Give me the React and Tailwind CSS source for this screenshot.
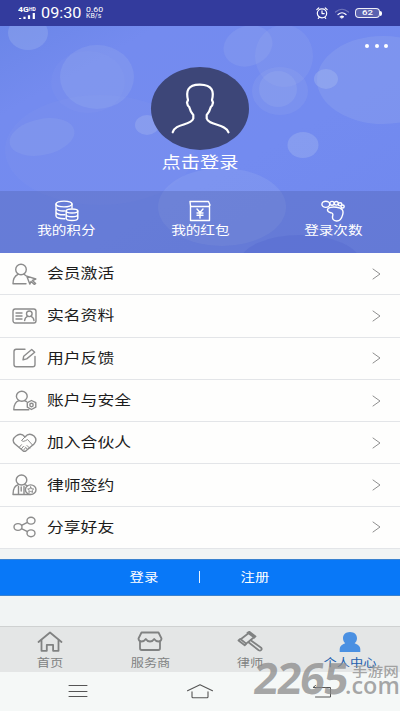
import clsx from 'clsx'

function T({ children, className, left }) {
  return (
    <span className={clsx('inline-block whitespace-nowrap scale-x-[1.2]',
      left ? 'origin-left' : 'origin-center', className)}>{children}</span>
  )
}

function Svg({ w, h, sw = 1.3, className, children }) {
  return (
    <svg width={w} height={h} viewBox={`0 0 ${w} ${h}`} fill="none"
      stroke="currentColor" strokeWidth={sw} strokeLinecap="round"
      strokeLinejoin="round" className={clsx('block shrink-0', className)}>
      {children}
    </svg>
  )
}

const ROWS = [
  { label: '会员激活', icon: (
    <>
      <ellipse cx="9" cy="6.5" rx="5.3" ry="5.2" />
      <path d="M6 11.300C2.500 13 1 16 1 20.700h13M12 11.300l2 1.400" />
      <path d="M14.800 13.200l9 2.800-3.400 1.500 3.200 3-1.200 1-3.400-3-1.200 2.600z" />
    </>
  ) },
  { label: '实名资料', icon: (
    <>
      <rect x="1" y="4" width="23" height="14" rx="2.2" />
      <path d="M4 8h6M4 11h6M4 14h6" />
      <circle cx="17.3" cy="8.8" r="2.8" />
      <path d="M12.600 15.600c.3-2.400 1.400-3.700 3-4.200M22 15.600c-.3-2.400-1.400-3.700-3-4.200" />
    </>
  ) },
  { label: '用户反馈', icon: (
    <>
      <path d="M13 2.200H4.200Q2 2.200 2 4.400v13.200q0 2.200 2.200 2.200h16.600q2.200 0 2.200-2.200V9.500" />
      <path d="M11 12.800l.7-3.600 8-6.700 3 2.800-8 6.600z" />
    </>
  ) },
  { label: '账户与安全', icon: (
    <>
      <ellipse cx="9.8" cy="6.2" rx="5.4" ry="5" />
      <path d="M7 10.700C3 12 1.800 15 1.800 19.800h15M12.500 10.700l2 .9" />
      <path d="M19.500 10.500l4.300 2.200v4.500l-4.300 2.300-4.200-2.300v-4.500z" />
      <circle cx="19.5" cy="15" r="1.7" />
    </>
  ) },
  { label: '加入合伙人', icon: (
    <>
      <path d="M13 5C10.500 2 7 1.700 4 4 .5 6.500.4 9.500 3 12l8 6.800q1.500 1 3 0l8-6.800C24.600 9.500 24.500 6.500 22 4c-3-2.300-6.500-2-9 1z" />
      <path d="M13 5L9.500 8.500q1.500 1.700 4 .2l2-1.200 5 5.500M7.500 15l2-2.300M9.500 16.700l2-2.400M11.600 18l1.700-2M15 13.500l2.700 2.700M13.300 15l2.400 2.600" strokeWidth="1" />
    </>
  ) },
  { label: '律师签约', icon: (
    <>
      <ellipse cx="9.5" cy="6" rx="5.3" ry="5" />
      <path d="M6.200 10.700Q1 12 1 20.500h17M12.700 10.700l2.500 1M6.500 20v-7.500M12 20v-7.500M9.200 13v4" />
      <ellipse cx="18.7" cy="15.7" rx="5.3" ry="4.8" />
      <path d="M18.700 12.900l.9 1.900 2.100.2-1.500 1.400.4 2-1.900-1-1.900 1 .4-2-1.500-1.400 2.100-.2z" strokeWidth="1" />
    </>
  ) },
  { label: '分享好友', icon: (
    <>
      <ellipse cx="6" cy="11" rx="4" ry="3.4" />
      <ellipse cx="19" cy="4.7" rx="4" ry="3.4" />
      <ellipse cx="19" cy="17.3" rx="4" ry="3.4" />
      <path d="M9.500 9.300l6-3M9.500 12.700l6 3" />
    </>
  ) },
]

const STATS = [
  { label: '我的积分', icon: (
    <>
      <ellipse cx="9" cy="4" rx="8" ry="2.9" />
      <path d="M1 4v12c0 1.700 3.500 2.800 9 2.700M17 4v4M1 8c0 2 4 3.300 9 2.900M1 12c0 2 4 3 9 2.700" />
      <ellipse cx="17" cy="11" rx="5.8" ry="2" />
      <path d="M11.200 11v7.200c0 1.300 2.500 2.300 5.800 2.300s5.800-1 5.800-2.300V11M11.200 14.700c0 1.300 2.500 2 5.800 2s5.800-.7 5.800-2" />
    </>
  ) },
  { label: '我的红包', icon: (
    <>
      <path d="M2.500 5.500v15h19V6.500M2.500 6L2 1.500h18.500l1.500 3.500-1 1.500H2.500" />
      <path d="M9 9l3 3.500L15 9M12 12.500V18M9 13h6M9 15.300h6" />
    </>
  ) },
  { label: '登录次数', icon: (
    <>
      <ellipse cx="4.8" cy="4.3" rx="3.9" ry="3.1" />
      <ellipse cx="11" cy="3.3" rx="2.2" ry="1.9" />
      <ellipse cx="15.3" cy="3.3" rx="2" ry="1.8" />
      <ellipse cx="19.1" cy="4.3" rx="1.8" ry="1.6" />
      <ellipse cx="21.6" cy="6.5" rx="1.6" ry="1.5" />
      <path d="M6.500 9.700c.3-2.500 5-3 9-2.500 6 .8 7.500 3.500 6 8-1 4-3 6-6 5.800-3.200-.2-4.600-2.300-3.800-5.300.6-2-.3-2.500-2-3C7.800 12.200 6.300 11.700 6.500 9.700z" />
    </>
  ) },
]

const TABS = [
  { label: '首页', icon: (
    <>
      <path d="M1.500 11L13 1.500 24.500 11" />
      <path d="M4.500 9.500v10.300h5.300v-6h6.300v6h5.400V9.500" />
    </>
  ) },
  { label: '服务商', icon: (
    <>
      <path d="M4.500 1.500h17l3 6q0 2.800-3 3-2.700 0-4.300-2.500-1.500 2.500-4.200 2.500T8.800 8Q7.200 10.500 4.500 10.500q-3-.2-3-3z" />
      <path d="M3 10.500v6.800q0 1.700 1.700 1.700h16.600q1.700 0 1.700-1.700v-6.800" />
    </>
  ) },
  { label: '律师', icon: (
    <>
      <path d="M3.700 8.300L11.500 2.300l5.500 4-7.800 6.300zM10.500 1.800l1.800-1 6.200 4.600-1.500 1.300M3.200 8L1.500 9.500l6.200 4.700 1.600-1.400" />
      <path d="M11.500 11.300l10.200 8q1.500.8 2.500-.3t-.1-2.300L13.700 9.300" />
    </>
  ) },
  { label: '个人中心', active: true, icon: (
    <path d="M13 1c4.500 0 7 2.800 7 6.200 0 2.300-1 4-2.400 5 3 1 5.700 3 5.700 5.800v3H2.700v-3c0-2.800 2.400-4.800 5.500-5.800C7 11.200 6 9.500 6 7.200 6 3.800 8.500 1 13 1z"
      fill="currentColor" stroke="none" />
  ) },
]

function StatusBar() {
  return (
    <div className="flex h-[26px] shrink-0 items-center bg-[#333b9d] pl-[18px] pr-[18px]
      font-['Roboto',sans-serif] text-white">
      <div className="flex w-[19px] flex-col">
        <div className="flex h-[6px] items-start font-bold leading-[6px]">
          <span className="inline-block w-[11px] origin-left scale-x-[1.15] text-[7.5px]">4G</span>
          <span className="text-[5px] leading-[4px]">HD</span>
        </div>
        <Svg w={18} h={6} sw={2.2}>
          <path d="M1 6h2.200M6.500 6V3.800M11 6V2.300M15.800 6V0" strokeLinecap="butt" />
        </Svg>
      </div>
      <span className="ml-[4px] w-[45px] text-[14px] leading-none">
        <T left className="scale-x-[1.16]">09:30</T>
      </span>
      <span className="flex flex-col text-[7px] leading-[6.500px]">
        <T left className="scale-x-[1.25]">0.60</T>
        <T left className="scale-x-[1]">KB/s</T>
      </span>
      <div className="ml-auto flex items-center">
        <Svg w={12} h={12} sw={1.2}>
          <ellipse cx="6" cy="6.3" rx="4.7" ry="4.5" />
          <path d="M6 3.800v2.800h2.200M.8 2.600L2.700 1M11.200 2.600L9.300 1M2.300 11.300l.9-.9M9.700 11.300l-.9-.9" />
        </Svg>
        <Svg w={16} h={12} sw={1.2} className="ml-[6px] mt-[2px]">
          <path d="M1.500 4Q8-1.500 14.500 4" opacity=".3" />
          <path d="M4 6.500Q8 3 12 6.500" />
          <path d="M6 8.700Q8 7 10 8.700L8 10.200z" fill="currentColor" strokeWidth=".6" />
        </Svg>
        <span className="ml-[5px] flex h-[10px] w-[25px] items-center justify-center rounded-[4px]
          border border-white/90 bg-white/20 text-[8px] font-medium leading-none">
          <T>62</T>
        </span>
        <span className="h-[5px] w-[2px] rounded-r bg-white" />
      </div>
    </div>
  )
}

function Bokeh() {
  return (
    <svg width="400" height="227" viewBox="0 26 400 227" className="absolute inset-0">
      <defs>
        <linearGradient id="sky" x1="0" y1="0" x2="1" y2="1">
          <stop offset="0" stopColor="#6b86e8" />
          <stop offset=".2" stopColor="#748bef" />
          <stop offset=".6" stopColor="#738bf0" />
          <stop offset="1" stopColor="#7088ee" />
        </linearGradient>
      </defs>
      <rect y="26" width="400" height="227" fill="url(#sky)" />
      <g fill="#a5b8ee">
        <ellipse cx="28" cy="33" rx="20" ry="17" opacity=".3" />
        <ellipse cx="97" cy="77" rx="37" ry="32" opacity=".22" />
        <ellipse cx="88" cy="82" rx="37" ry="31" opacity=".06" />
        <ellipse cx="100" cy="150" rx="95" ry="55" opacity=".06" />
        <ellipse cx="42" cy="137" rx="33" ry="18" opacity=".16" transform="rotate(-12 42 137)" />
        <ellipse cx="147" cy="125" rx="12" ry="10" opacity=".36" />
        <ellipse cx="248" cy="46" rx="25" ry="20" opacity=".18" transform="rotate(-20 248 46)" />
        <ellipse cx="284" cy="56" rx="29" ry="31" opacity=".15" />
        <ellipse cx="280" cy="91" rx="28" ry="24" opacity=".15" />
        <ellipse cx="278" cy="89" rx="19" ry="18" opacity=".22" />
        <ellipse cx="383" cy="80" rx="66" ry="44" opacity=".22" />
        <ellipse cx="326" cy="79" rx="12" ry="10" opacity=".42" />
        <ellipse cx="303" cy="145" rx="15.5" ry="13" opacity=".38" />
        <ellipse cx="222" cy="207" rx="64" ry="39" opacity=".2" />
      </g>
      <ellipse cx="300" cy="262" rx="60" ry="27" fill="#5368e0" opacity=".3" />
    </svg>
  )
}

function Header() {
  return (
    <div className="relative flex h-[227px] shrink-0 flex-col overflow-hidden text-white">
      <Bokeh />
      <div className="relative flex h-[165px] flex-col items-center pt-[41px]">
        <div className="absolute right-[12px] top-[18px] flex gap-[5.500px]">
          {[0, 1, 2].map((i) => <i key={i} className="h-[4px] w-[4px] rounded-full bg-white" />)}
        </div>
        <div className="h-[83px] w-[98px] shrink-0 rounded-[50%] bg-[#3d4678]">
          <Svg w={98} h={83} sw={2.2}>
            <path d="M21.700 65.300C24 56 40 59 42.300 51.500V48C40.500 46 39 43 38.300 40.200Q36.500 39 36 35.500l1-2.500C35 25 36 17.500 49 17.700S63 25 61 33l1 2.500Q61.500 39 59.700 40.200C59 43 57.500 46 55.700 48v3.500C58 59 74 56 77.500 65.300" />
          </Svg>
        </div>
        <T className="mt-px text-[16px] leading-[20px]">点击登录</T>
      </div>
      <div className="relative flex flex-1 justify-between bg-[#485b9f]/30">
        {STATS.map((s) => (
          <div key={s.label} className="flex w-1/3 flex-col items-center pt-[9px]">
            <Svg w={24} h={22} sw={1.4}>{s.icon}</Svg>
            <T className="text-[12.2px] leading-[16px]">{s.label}</T>
          </div>
        ))}
      </div>
    </div>
  )
}

function Row({ label, icon }) {
  return (
    <div className="flex h-[42.3px] shrink-0 items-center border-b border-[#e3e5e8] bg-[#fefefd]
      pl-[12px] pr-[19px]">
      <Svg w={25} h={22} sw={1.4} className="text-[#8c8c8c]">{icon}</Svg>
      <T left className="mb-[3px] ml-[10px] text-[14px] leading-[20px] text-[#1c1c1c]">{label}</T>
      <Svg w={9} h={12} sw={1} className="ml-auto text-[#8f8f8f]">
        <path d="M1 1l7 5-7 5" />
      </Svg>
    </div>
  )
}

function Watermark() {
  return (
    <div className="absolute left-[252px] top-[659px] flex text-[#8b8b8b]/75">
      <span className="inline-block w-[93px] origin-bottom-left -skew-x-6 font-['Open_Sans',sans-serif]
        text-[43px] font-bold leading-[38px] tracking-[-1.200px]">2265</span>
      <span className="flex flex-col pt-[5px]">
        <T left className="ml-[7px] text-[13px] font-medium leading-[14px]">手游网</T>
        <span className="inline-block origin-left scale-x-[1.02] font-['Open_Sans',sans-serif]
          text-[23px] font-semibold leading-[15px]">.com</span>
      </span>
    </div>
  )
}

export default function App() {
  return (
    <div className="relative flex h-[711px] w-[400px] flex-col overflow-hidden bg-[#f1f4f4]
      font-['Noto_Sans_CJK_SC',sans-serif]">
      <StatusBar />
      <Header />
      <div className="flex flex-col">
        {ROWS.map((r) => <Row key={r.label} {...r} />)}
      </div>
      <div className="mt-[10px] flex h-[37px] shrink-0 items-center justify-center border-y
        border-[#3a82cf] bg-[#0878f8] pb-[2px] pr-px text-[12px] text-white">
        <T>登录</T>
        <i className="mx-[43px] h-[12px] w-px bg-white/90" />
        <T>注册</T>
      </div>
      <div className="mt-auto flex h-[46px] shrink-0 border-t border-[#cfd1d1] bg-[#e4e6e6]">
        {TABS.map((t) => (
          <div key={t.label} className={clsx('flex flex-1 flex-col items-center pt-[4px]',
            t.active ? 'text-[#4a90e2]' : 'text-[#808282]')}>
            <Svg w={26} h={21} sw={1.8}>{t.icon}</Svg>
            <T className={clsx('mt-[2px] text-[11px] leading-[16px]',
              t.active && 'text-[#1e5fae]')}>{t.label}</T>
          </div>
        ))}
      </div>
      <div className="flex h-[39px] shrink-0 items-start justify-between bg-[#f5f8f7] pl-[68px]
        pr-[68px] pt-[11px] text-[#555]">
        <Svg w={20} h={16} sw={1}><path d="M1 2.500h18M1 8.500h18M1 13.500h18" /></Svg>
        <Svg w={26} h={16} sw={1.1}>
          <path d="M.5 7.700L13 1.800l12.500 5.900M5 8.700v5q0 1 1 1h14q1 0 1-1v-5" />
        </Svg>
        <Svg w={20} h={16} sw={1}><path d="M3.500 2.500L1 4.500h17.500v9.500H3.500" /></Svg>
      </div>
      <Watermark />
    </div>
  )
}
